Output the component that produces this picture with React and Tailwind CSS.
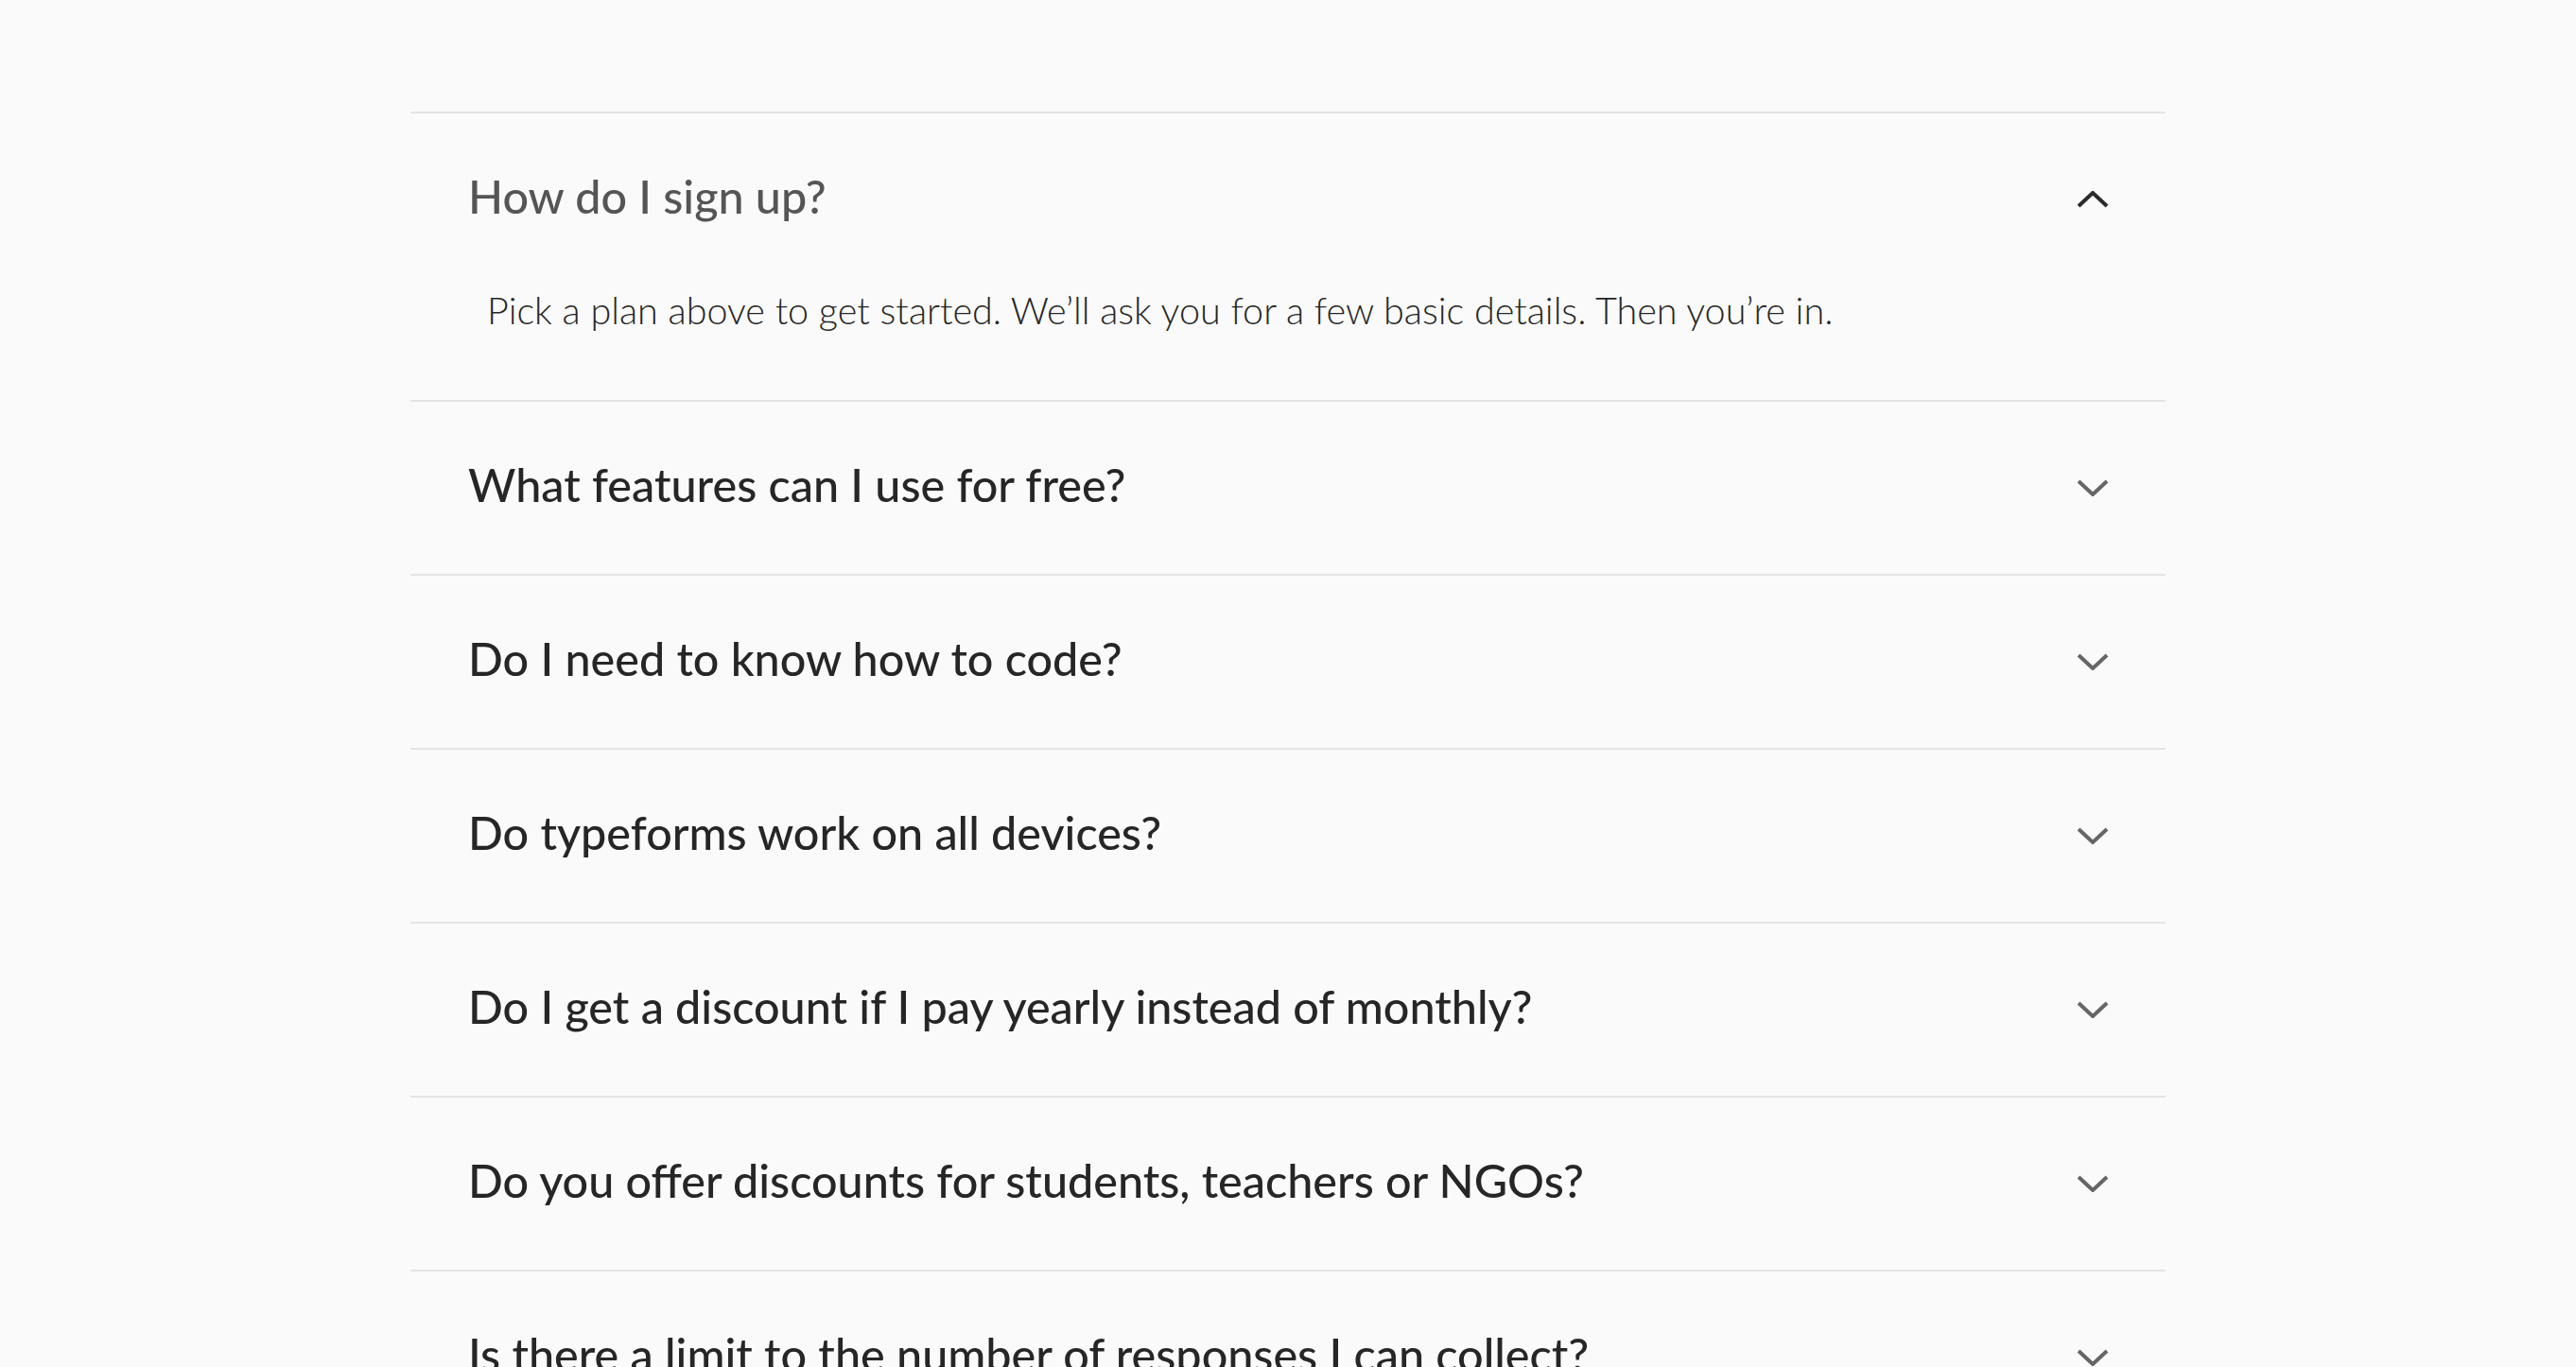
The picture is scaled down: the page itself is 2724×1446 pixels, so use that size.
import React from "react";

const items = [
  { q: "How do I sign up?", a: "Pick a plan above to get started. We\u2019ll ask you for a few basic details. Then you\u2019re in.", open: true },
  { q: "What features can I use for free?" },
  { q: "Do I need to know how to code?" },
  { q: "Do typeforms work on all devices?" },
  { q: "Do I get a discount if I pay yearly instead of monthly?" },
  { q: "Do you offer discounts for students, teachers or NGOs?" },
  { q: "Is there a limit to the number of responses I can collect?" },
  { q: "Can I cancel my subscription at any time?" },
];

function Chevron({ up }) {
  return (
    <svg width="34" height="18" viewBox="0 0 34 18" fill="none" className={up ? "text-[#2b2b2b]" : "text-[#666666]"}>
      <path d={up ? "M2 16 L17 2 L32 16" : "M2 2 L17 16 L32 2"} stroke="currentColor" strokeWidth="4" strokeLinejoin="miter" />
    </svg>
  );
}

export default function App() {
  return (
    <div className="h-screen overflow-hidden bg-[#fafafa] pt-[118px]" style={{ fontFamily: "Lato, 'Liberation Sans', sans-serif" }}>
      <div className="mx-auto w-[1856px]">
        {items.map((it, i) => (
          <div key={i} className="border-t-2 border-[#e4e4e4]">
            <div className="flex h-[182px] items-center justify-between pl-[61px] pr-[60px]">
              <span className={`pb-[8px] text-[48.5px] font-medium leading-none ${it.open ? "text-[#555555]" : "text-[#262626]"}`}>{it.q}</span>
              <Chevron up={it.open} />
            </div>
            {it.open && (
              <div className="pb-[69px] pl-[81px] pr-[60px] text-[39.5px] font-light leading-[52px] text-[#262626]">{it.a}</div>
            )}
          </div>
        ))}
      </div>
    </div>
  );
}
